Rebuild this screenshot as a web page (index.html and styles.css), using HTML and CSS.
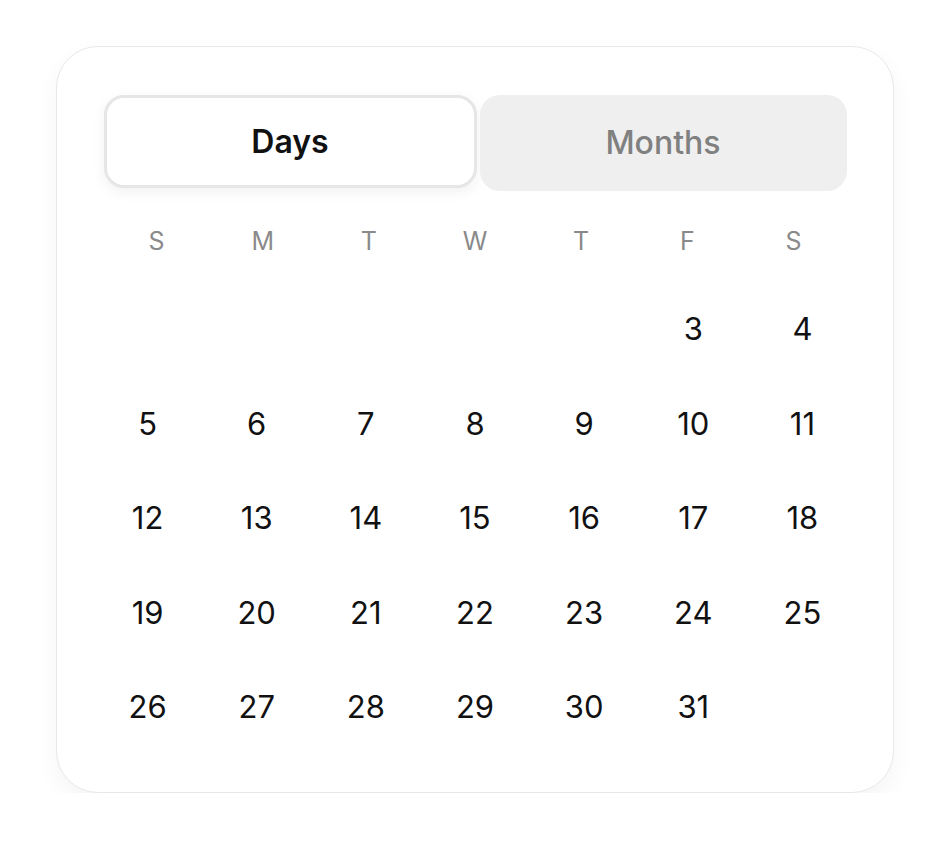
FILE: index.html
```html
<!DOCTYPE html>
<html lang="en">
<head>
<meta charset="utf-8">
<title>Calendar</title>
<link rel="stylesheet" href="styles.css">
</head>
<body>
<div class="card">
  <div class="tabs">
    <div class="tab tab-active">Days</div>
    <div class="tab tab-idle">Months</div>
  </div>
  <div class="weekdays">
    <span>S</span><span>M</span><span>T</span><span>W</span><span>T</span><span>F</span><span>S</span>
  </div>
  <div class="days">
    <span></span><span></span><span></span><span></span><span></span><span>3</span><span>4</span>
    <span>5</span><span>6</span><span>7</span><span>8</span><span>9</span><span>10</span><span>11</span>
    <span>12</span><span>13</span><span>14</span><span>15</span><span>16</span><span>17</span><span>18</span>
    <span>19</span><span>20</span><span>21</span><span>22</span><span>23</span><span>24</span><span>25</span>
    <span>26</span><span>27</span><span>28</span><span>29</span><span>30</span><span>31</span><span></span>
  </div>
</div>
</body>
</html>
```
FILE: styles.css
```css
html, body {
  margin: 0;
  padding: 0;
  background: #ffffff;
}
body {
  font-family: Inter, "Noto Sans", "Liberation Sans", sans-serif;
  padding: 46px 0 0 56px;
}
.card {
  box-sizing: border-box;
  width: 838px;
  height: 747px;
  border: 1.5px solid #e8e8e8;
  border-radius: 42px;
  background: #fff;
  padding: 47.5px 46.5px 0 46.5px;
  box-shadow: 0 10px 24px rgba(0, 0, 0, 0.045);
}
.tabs {
  display: flex;
  gap: 3px;
  height: 94px;
}
.tab {
  flex: 1;
  box-sizing: border-box;
  display: flex;
  align-items: center;
  justify-content: center;
  border-radius: 20px;
  font-size: 32px;
}
.tab-active {
  background: #fff;
  border: 3px solid #e6e6e6;
  color: #111;
  font-weight: 600;
  height: 93px;
  box-shadow: 0 4px 14px rgba(0, 0, 0, 0.06);
}
.tab-idle {
  background: #efefef;
  color: #808080;
  font-weight: 500;
  height: 96px;
}
.weekdays {
  display: grid;
  grid-template-columns: repeat(7, 1fr);
  margin-top: 37px;
  height: 30px;
  line-height: 30px;
  font-size: 25px;
  color: #8a8a8a;
  text-align: center;
}
.days {
  display: grid;
  grid-template-columns: repeat(7, 1fr);
  grid-auto-rows: 94.5px;
  margin: 26px -10.5px 0 -10.5px;
  font-size: 31px;
  color: #111;
  text-align: center;
}
.days span {
  display: flex;
  align-items: center;
  justify-content: center;
}
```
